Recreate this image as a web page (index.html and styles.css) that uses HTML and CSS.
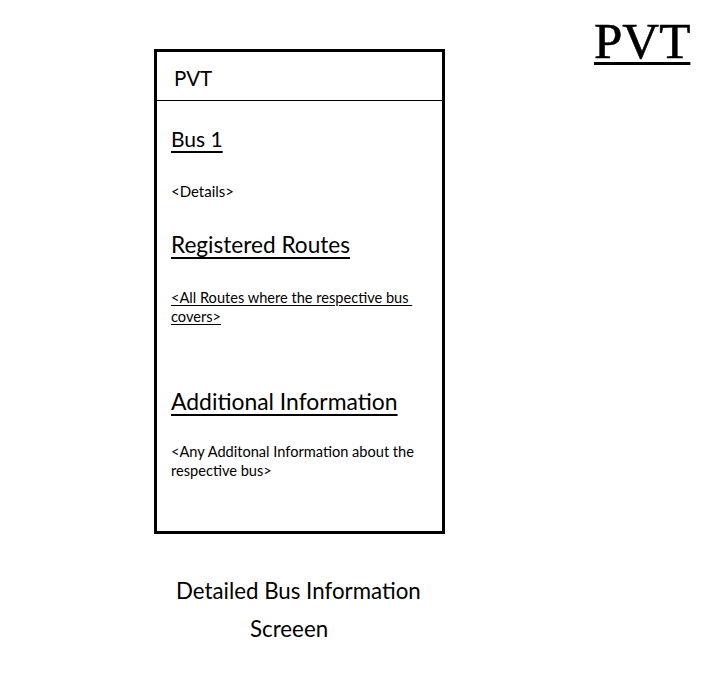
FILE: index.html
```html
<!DOCTYPE html>
<html>
<head>
<meta charset="utf-8">
<link rel="stylesheet" href="styles.css">
</head>
<body>
<div class="page">
  <div class="left">
    <div class="phone">
      <div class="phone-header">PVT</div>
      <div class="phone-body">
        <h2 class="title">Bus 1</h2>
        <p class="small">&lt;Details&gt;</p>
        <h2 class="heading h-routes">Registered Routes</h2>
        <p class="text link">&lt;All Routes where the respective bus&nbsp;<br>covers&gt;</p>
        <h2 class="heading h-info">Additional Information</h2>
        <p class="text">&lt;Any Additonal Information about the<br>respective bus&gt;</p>
      </div>
    </div>
    <div class="caption">
      <div class="cap1">Detailed Bus Information</div>
      <div class="cap2">Screeen</div>
    </div>
  </div>
  <div class="logo">PVT</div>
</div>
</body>
</html>
```
FILE: styles.css
```css
html, body {
  margin: 0;
  padding: 0;
  background: #fff;
  color: #000;
}
body {
  font-family: Lato, "Noto Sans", sans-serif;
}
.page {
  display: flex;
  padding: 0 0 0 154px;
  width: 717px;
  height: 685px;
  box-sizing: border-box;
}
.left {
  display: flex;
  flex-direction: column;
  padding-top: 49px;
}
.phone {
  width: 291px;
  height: 485px;
  border: 3px solid #000;
  box-sizing: border-box;
}
.phone-header {
  height: 49px;
  border-bottom: 1px solid #000;
  padding-left: 17px;
  font-size: 20.5px;
  line-height: 53px;
  box-sizing: border-box;
}
.phone-body {
  padding: 0 0 0 14px;
}
.phone-body h2, .phone-body p {
  margin: 0;
  font-weight: normal;
}
.title {
  font-size: 21px;
  line-height: 26px;
  margin-top: 25px !important;
  text-decoration: underline;
  text-decoration-thickness: 2px;
  text-underline-offset: 4px;
}
.small {
  font-size: 15px;
  line-height: 18px;
  margin-top: 30px !important;
}
.heading {
  font-size: 22.6px;
  line-height: 26px;
  text-decoration: underline;
  text-decoration-thickness: 2px;
  text-underline-offset: 4px;
}
.h-routes { margin-top: 32px !important; }
.h-info { margin-top: 62px !important; }
.h-info { font-size: 22.9px; }
.text {
  font-size: 14.6px;
  line-height: 19px;
}
.link {
  margin-top: 30px !important;
  text-decoration: underline;
  text-underline-offset: 2px;
}
.h-info + .text { margin-top: 28px !important; }
.caption {
  padding-top: 38px;
  font-size: 22.3px;
  line-height: 38px;
}
.cap1 { padding-left: 22px; }
.cap2 { padding-left: 96px; }
.logo {
  margin-left: 149px;
  padding-top: 13px;
  font-family: "Liberation Serif", "Times New Roman", serif;
  font-size: 51px;
  line-height: 56px;
  -webkit-text-stroke: 0.6px #000;
  text-decoration: underline;
  text-decoration-thickness: 3px;
  text-underline-offset: 4px;
  height: 60px;
}
```
